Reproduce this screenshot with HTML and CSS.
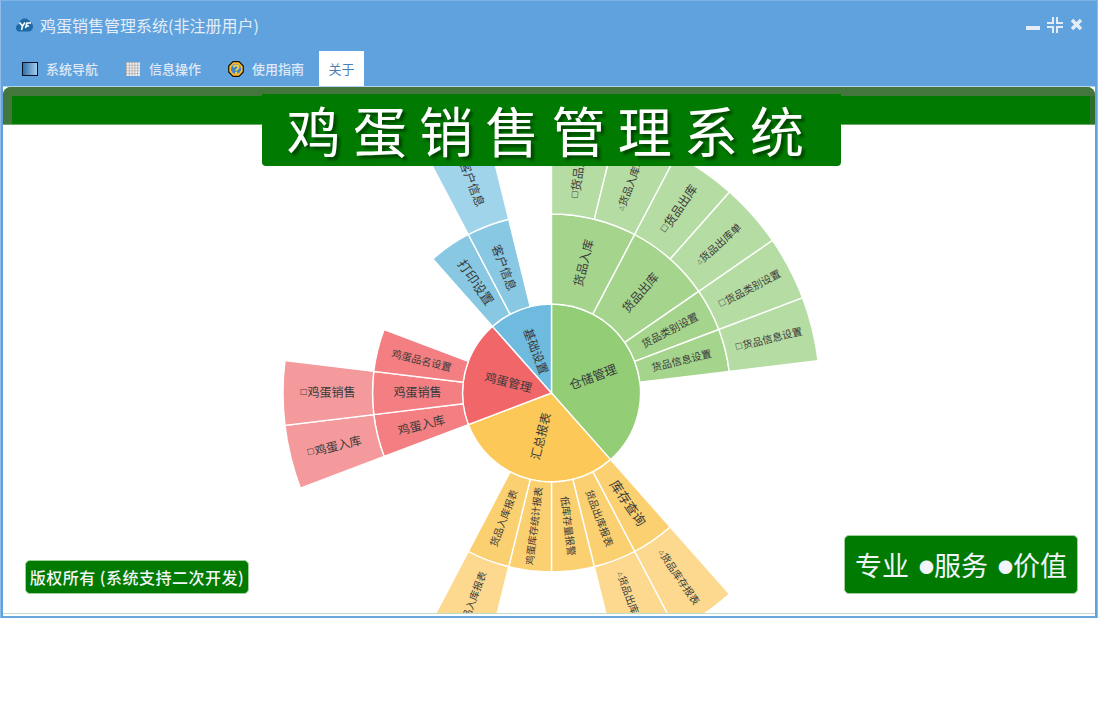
FILE: index.html
```html
<!DOCTYPE html>
<html lang="zh-CN">
<head>
<meta charset="utf-8">
<title>鸡蛋销售管理系统</title>
<link rel="stylesheet" href="styles.css">
</head>
<body>
<div class="window">
  <header class="titlebar">
    <svg class="logo" width="17" height="14" viewBox="0 0 17 14"><path d="M3 13.500C.8 13.500 0 11.600 0 9.800 0 7.800 1.300 6.400 3 6.200 3.400 2.600 6 .6 9 .6c2.700 0 4.700 1.700 5.300 4 1.600.4 2.700 1.900 2.700 3.900 0 2.900-2 5-4.500 5z" fill="#1d6aa5"/><path d="M3.500 4.500 6.500 8 5.500 12M9 4.500 6.500 8M9.500 10 11 5H15M9.500 8H13" fill="none" stroke="#fff" stroke-width="1.600"/></svg>
    <span class="title-text">鸡蛋销售管理系统(非注册用户)</span>
    <div class="win-tools">
      <svg width="14" height="14" viewBox="0 0 14 14"><rect x="0" y="8" width="14" height="4" fill="#e4edf7"/></svg>
      <svg width="16" height="16" viewBox="0 0 16 16"><path d="M6 0v6H0M10 0v6h6M6 16v-6H0M10 16v-6h6" fill="none" stroke="#e4edf7" stroke-width="2"/></svg>
      <svg width="13" height="13" viewBox="0 0 13 13"><path d="M2 2l9 9M11 2l-9 9" stroke="#e4edf7" stroke-width="3.400"/></svg>
    </div>
  </header>
  <nav class="tabs">
    <a class="tab tab-nav">
      <svg width="16" height="14" viewBox="0 0 16 14"><defs><linearGradient id="scr" x1="0" x2="1"><stop offset="0" stop-color="#2a6fa8"/><stop offset="1" stop-color="#a8d0ee"/></linearGradient></defs><rect x=".5" y=".5" width="15" height="13" fill="url(#scr)" stroke="#05122a"/></svg>
      <span>系统导航</span>
    </a>
    <a class="tab tab-info">
      <svg width="14" height="14" viewBox="0 0 14 14"><defs><pattern id="gr" width="2.800" height="2.800" patternUnits="userSpaceOnUse"><rect width="2.800" height="2.800" fill="#efefef"/><path d="M0 0H2.800M0 0V2.800" stroke="#8d8d8d" stroke-width="1"/></pattern></defs><rect width="14" height="14" fill="url(#gr)"/></svg>
      <span>信息操作</span>
    </a>
    <a class="tab tab-help">
      <svg width="16" height="16" viewBox="0 0 16 16"><path d="M5 .7h6L15.300 5v6L11 15.300H5L.7 11V5z" fill="#f7b92e" stroke="#1b1206" stroke-width="1.200"/><circle cx="8" cy="8" r="5" fill="#3f86c6"/><path d="M5.800 6.200C6 3.800 10.500 3.800 10.500 6.300 10.500 8 8.200 7.800 8.200 9.800" fill="none" stroke="#ffd54a" stroke-width="1.800"/><rect x="7.200" y="10.800" width="2" height="2" fill="#ffd54a"/></svg>
      <span>使用指南</span>
    </a>
    <a class="tab tab-active"><span>关于</span></a>
  </nav>
  <main class="body">
    <svg id="chart" class="chart" width="1092" height="526" viewBox="3 87 1092 526"></svg>
    <div class="head-strip"></div>
    <h1 class="banner">鸡蛋销售管理系统</h1>
    <div class="badge badge-left">版权所有 (系统支持二次开发)</div>
    <div class="badge badge-right">专业 <span class="dot">●</span>服务 <span class="dot">●</span>价值</div>
  </main>
  <div class="body-foot"></div>
</div>
<script src="chart.js"></script>
</body>
</html>
```

FILE: styles.css
```css
* { box-sizing: border-box; }
html, body { margin: 0; height: 100%; background: #fff; }
body { font-family: "Noto Sans CJK SC", "Liberation Sans", sans-serif; overflow: hidden; }

.window {
  width: 1098px;
  height: 618px;
  background: #5fa2dd;
  border: 1px solid #8fbce8;
  border-top-color: #7db2e6;
  border-bottom: 0;
  display: flex;
  flex-direction: column;
}
.titlebar {
  height: 43px;
  flex: none;
  display: flex;
  align-items: center;
  padding: 4px 14px 0 15px;
}
.logo { flex: none; margin-right: 7px; }
.title-text { font-size: 16px; color: #e4edf7; line-height: 20px; }
.win-tools { margin-left: auto; display: flex; align-items: center; gap: 7px; }

.tabs {
  height: 42px;
  flex: none;
  display: flex;
  align-items: flex-end;
  padding: 0 0 0 21px;
}
.tab {
  height: 35px;
  display: flex;
  align-items: center;
  gap: 8px;
  font-size: 13px;
  color: #dfe8f6;
  font-weight: 500;
}
.tab-nav { width: 104px; }
.tab-info { width: 102px; gap: 9px; }
.tab-help { width: 91px; }
.tab-active {
  width: 45px;
  justify-content: center;
  background: #fff;
  color: #4a7fb5;
  font-weight: 400;
}

.body {
  position: relative;
  flex: none;
  height: 527px;
  margin: 0 2px;
  background: #fff;
  border-top: 1px solid #b6d2ee;
  overflow: hidden;
}
.body-foot {
  flex: none;
  height: 5px;
  margin: 0 2px;
  background: #fff;
  border-top: 1px solid #c3dcc8;
  border-bottom: 2px solid #6aa6de;
}
.chart { position: absolute; left: 0; top: 0; display: block; }
.seg-label { fill: #3a3a3a; font-family: "Noto Sans CJK SC", sans-serif; }
.seg-mark { fill: #444; font-family: "DejaVu Sans", sans-serif; }

.head-strip {
  position: absolute;
  left: 0;
  right: 0;
  top: 0;
  height: 38px;
  border-radius: 8px 8px 0 0;
  border-bottom: 1px solid #6ea96e;
  background:
    linear-gradient(#43763c 9px, transparent 9px),
    linear-gradient(90deg, #43763c 9px, #007a00 9px, #007a00 calc(100% - 5px), #2f7029 calc(100% - 5px));
}
.banner {
  position: absolute;
  left: 259px;
  top: 7px;
  width: 579px;
  height: 72px;
  margin: 0;
  background: #007a00;
  border-radius: 0 0 4px 4px;
  color: #fff;
  font-size: 54px;
  font-weight: 400;
  letter-spacing: 12.2px;
  line-height: 72px;
  text-align: center;
  white-space: nowrap;
  text-shadow: 3px 3px 3px rgba(0, 0, 0, .45);
}
.badge {
  position: absolute;
  background: #007a00;
  border: 1px solid #9fcf9f;
  border-radius: 5px;
  color: #f2f5fa;
  white-space: nowrap;
  display: flex;
  align-items: center;
  justify-content: center;
}
.badge-left {
  left: 22px;
  top: 473px;
  width: 224px;
  height: 34px;
  font-size: 16px;
  font-weight: 500;
  letter-spacing: .5px;
}
.badge-right {
  left: 841px;
  top: 448px;
  width: 234px;
  height: 59px;
  font-size: 27px;
  white-space: pre;
}
.dot { font-size: 15px; margin-left: 4px; position: relative; top: 2px; }
```

FILE: chart.js
```js
(function () {
  var CX = 551.5, CY = 393, R = [0, 89, 179, 268.5], UNIT = 360 / 26;
  var NS = "http://www.w3.org/2000/svg";
  var svg = document.getElementById("chart");
  // [ring, startUnit, endUnit, colour, text, fontSize, mark]
  var G = ["#93ce76", "#a5d48c", "#b5dca2"];
  var O = ["#fcc858", "#fbd071", "#fcd98e"];
  var P = ["#f06669", "#f37f82", "#f59a9c"];
  var B = ["#6fbbdf", "#88c8e3", "#a0d4ea"];
  var segs = [
    [0, 0, 10, G, "仓储管理", 12.5],
    [1, 0, 2, G, "货品入库", 12],
    [1, 2, 4, G, "货品出库", 12],
    [1, 4, 5, G, "货品类别设置", 10.4],
    [1, 5, 6, G, "货品信息设置", 10.2],
    [2, 0, 1, G, "货品入库", 12, "□"],
    [2, 1, 2, G, "货品入库单", 10.4, "△"],
    [2, 2, 3, G, "货品出库", 12, "□"],
    [2, 3, 4, G, "货品出库单", 10.4, "△"],
    [2, 4, 5, G, "货品类别设置", 10.2, "□"],
    [2, 5, 6, G, "货品信息设置", 10.2, "□"],
    [0, 10, 18, O, "汇总报表", 12],
    [1, 10, 11, O, "库存查询", 13],
    [1, 11, 12, O, "货品出库报表", 10],
    [1, 12, 13, O, "低库存量报警", 10],
    [1, 13, 14, O, "鸡蛋库存统计报表", 9.8],
    [1, 14, 15, O, "货品入库报表", 10],
    [2, 10, 11, O, "货品库存报表", 10, "△"],
    [2, 11, 12, O, "货品出库报表", 10, "△"],
    [2, 14, 15, O, "货品入库报表", 10, "△"],
    [0, 18, 23, P, "鸡蛋管理", 12],
    [1, 18, 19, P, "鸡蛋入库", 12],
    [1, 19, 20, P, "鸡蛋销售", 12],
    [1, 20, 21, P, "鸡蛋品名设置", 10.2],
    [2, 18, 19, P, "鸡蛋入库", 12, "□"],
    [2, 19, 20, P, "鸡蛋销售", 12, "□"],
    [0, 23, 26, B, "基础设置", 12],
    [1, 23, 24, B, "打印设置", 13],
    [1, 24, 25, B, "客户信息", 12],
    [2, 24, 25, B, "客户信息", 12]
  ];
  function pt(r, deg) {
    var a = deg * Math.PI / 180;
    return [CX + r * Math.sin(a), CY - r * Math.cos(a)];
  }
  function el(name, attrs, parent) {
    var e = document.createElementNS(NS, name);
    for (var k in attrs) e.setAttribute(k, attrs[k]);
    parent.appendChild(e);
    return e;
  }
  segs.forEach(function (s) {
    var a0 = s[1] * UNIT, a1 = s[2] * UNIT, r0 = R[s[0]], r1 = R[s[0] + 1];
    var p0 = pt(r1, a0), p1 = pt(r1, a1), p2 = pt(r0, a1), p3 = pt(r0, a0);
    var large = a1 - a0 > 180 ? 1 : 0;
    var d = "M" + p0 + "A" + r1 + " " + r1 + " 0 " + large + " 1 " + p1 +
      "L" + p2 + (r0 ? "A" + r0 + " " + r0 + " 0 " + large + " 0 " + p3 : "") + "Z";
    el("path", { d: d, fill: s[3][s[0]], stroke: "#fff", "stroke-width": 1.4 }, svg);
  });
  segs.forEach(function (s) {
    var mid = (s[1] + s[2]) / 2 * UNIT, r = (R[s[0]] + R[s[0] + 1]) / 2;
    var c = pt(r, mid);
    var rot = mid < 180 ? mid - 90 : mid + 90;
    var t = el("text", {
      class: "seg-label",
      y: -1.7,
      "text-anchor": "middle",
      "dominant-baseline": "central",
      "font-size": s[5],
      transform: "translate(" + c + ") rotate(" + rot + ")"
    }, svg);
    if (s[6]) {
      var m = el("tspan", { class: "seg-mark", "font-size": s[6] === "□" ? 8 : 6 }, t);
      m.textContent = s[6];
    }
    var b = el("tspan", {}, t);
    b.textContent = s[4];
  });
})();
```
